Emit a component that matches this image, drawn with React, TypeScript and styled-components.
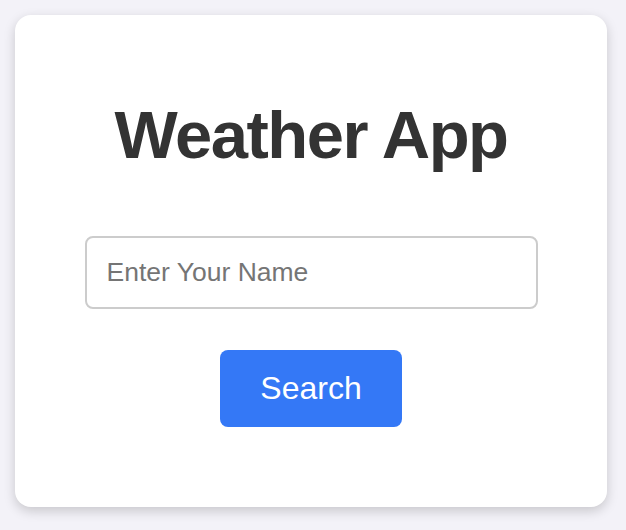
import React, { useState } from 'react'
import styled, { createGlobalStyle } from 'styled-components'

const GlobalStyle = createGlobalStyle`
  html, body {
    margin: 0;
    padding: 0;
    background: #f3f2f8;
    font-family: "Liberation Sans", Arial, sans-serif;
  }
`

const Page = styled.div`
  padding: 15px 19px 23px 15px;
`

const Card = styled.div`
  width: 592px;
  height: 492px;
  box-sizing: border-box;
  background: #ffffff;
  border-radius: 16px;
  box-shadow: 0 4px 12px rgba(0, 0, 0, 0.18);
  display: flex;
  flex-direction: column;
  align-items: center;
  padding-top: 83px;
`

const Title = styled.h1`
  margin: 0 0 64px;
  font-size: 67px;
  line-height: 74px;
  letter-spacing: -1.5px;
  font-weight: 700;
  color: #333333;
`

const NameInput = styled.input`
  width: 453px;
  height: 73px;
  box-sizing: border-box;
  padding: 0 20px;
  border: 2px solid #cccccc;
  border-radius: 8px;
  font-family: "Liberation Sans", Arial, sans-serif;
  font-size: 26.5px;
  color: #333333;
  outline: none;

  &::placeholder {
    color: #757575;
  }
`

const SearchButton = styled.button`
  margin-top: 41px;
  width: 182px;
  height: 77px;
  border: none;
  border-radius: 8px;
  background: #3478f6;
  color: #ffffff;
  font-family: "Liberation Sans", Arial, sans-serif;
  font-size: 32px;
  cursor: pointer;
`

const App: React.FC = () => {
  const [name, setName] = useState('')

  return (
    <Page>
      <GlobalStyle />
      <Card>
        <Title>Weather App</Title>
        <NameInput
          type="text"
          placeholder="Enter Your Name"
          value={name}
          onChange={(e) => setName(e.target.value)}
        />
        <SearchButton>Search</SearchButton>
      </Card>
    </Page>
  )
}

export default App
